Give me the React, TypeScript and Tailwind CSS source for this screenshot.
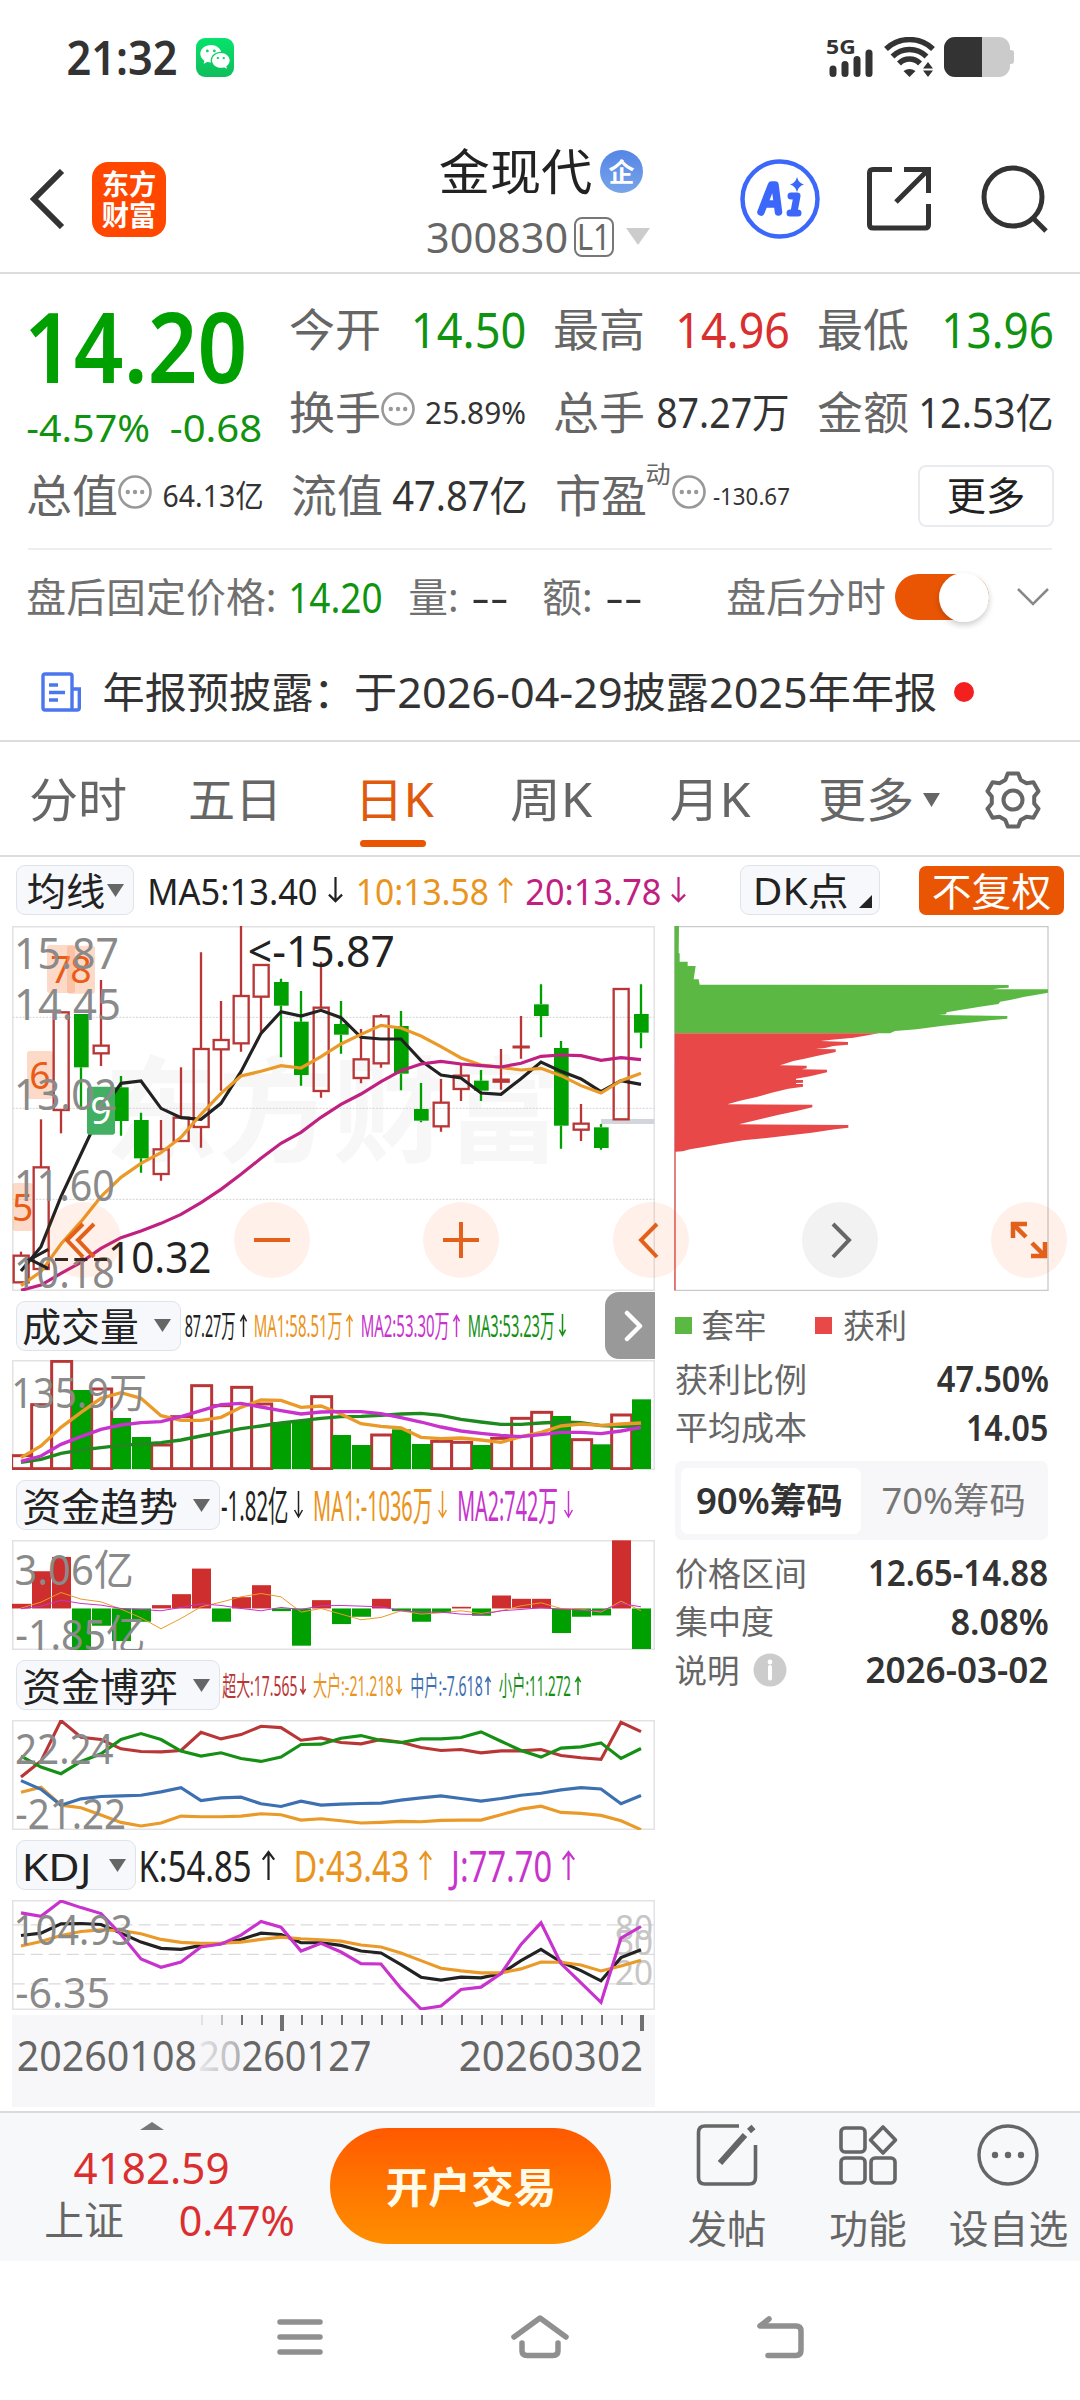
import React, { useLayoutEffect, useRef, useState } from 'react';
import { RiWechatFill } from 'react-icons/ri';

const FONT = "font-['Noto_Sans','Noto_Sans_CJK_SC',sans-serif]";

/** One line of text, squeezed or stretched horizontally to the width of its box. */
function Fit({ className = '', children }: { className?: string; children: string }) {
  const outer = useRef<HTMLSpanElement>(null);
  const inner = useRef<HTMLSpanElement>(null);
  const [scale, setScale] = useState(1);
  useLayoutEffect(() => {
    if (!outer.current || !inner.current) return;
    const size = parseFloat(getComputedStyle(inner.current).fontSize);
    setScale((outer.current.clientWidth + size * 0.09) / inner.current.offsetWidth);
  }, [children]);
  return (
    <span ref={outer} className={`inline-flex shrink-0 justify-center whitespace-nowrap leading-none ${className}`}>
      <span ref={inner} className="inline-block shrink-0" style={{ transform: `scaleX(${scale})` }}>
        {children}
      </span>
    </span>
  );
}

function Arrow({ up = false, thin = false, className = '' }: { up?: boolean; thin?: boolean; className?: string }) {
  return (
    <svg viewBox="0 0 16 28" preserveAspectRatio="none" className={`shrink-0 overflow-visible ${className}`} fill="none" stroke="currentColor" strokeWidth={thin ? 1.5 : 2.2}>
      <path d={up ? 'M8 28V2M1 9L8 2L15 9' : 'M8 0V26M1 19L8 26L15 19'} vectorEffect="non-scaling-stroke" />
    </svg>
  );
}

function Down({ className = '' }: { className?: string }) {
  return (
    <svg viewBox="0 0 16 13" preserveAspectRatio="none" className={`shrink-0 ${className}`} fill="currentColor">
      <path d="M0 0H16L8 13Z" />
    </svg>
  );
}

function Dots() {
  return (
    <svg viewBox="0 0 34 34" className="h-[34px] w-[34px] shrink-0 text-[#999]" fill="none" stroke="currentColor" strokeWidth="2.6">
      <circle cx="17" cy="17" r="15.5" />
      <g fill="currentColor" stroke="none">
        <circle cx="9.8" cy="17" r="2.2" />
        <circle cx="17" cy="17" r="2.2" />
        <circle cx="24.2" cy="17" r="2.2" />
      </g>
    </svg>
  );
}

function StatusBar() {
  return (
    <div className="flex h-[115px] items-center pb-px pl-[68px] pr-[66px] text-[#333]">
      <Fit className="w-[107px] text-[46px] font-semibold">21:32</Fit>
      <div className="ml-[21px] flex h-[39px] w-[38px] items-center justify-center rounded-[9px] bg-gradient-to-b from-[#06e36c] to-[#0fbd5c]">
        <RiWechatFill className="h-[32px] w-[32px] text-white" />
      </div>
      <div className="ml-auto flex h-[40px] items-center">
        <div className="flex h-[40px] w-[48px] flex-col justify-between">
          <Fit className="w-[28px] text-[20px] font-bold">5G</Fit>
          <svg viewBox="0 0 48 28" className="-mt-[8px] h-[28px] w-[48px]" fill="none" stroke="#333" strokeWidth="7" strokeLinecap="round">
            <path d="M6 20V24.500M18 15.500V24.500M30 10.500V24.500M42 4V24.500" />
          </svg>
        </div>
        <svg viewBox="0 0 52 40" className="ml-[9px] h-[40px] w-[52px]" fill="none" stroke="#333" strokeWidth="5.500">
          <path d="M2 12A34 34 0 0 1 49 12M8.500 19.500A24 24 0 0 1 42.500 19.500M15 26.500A14.500 14.500 0 0 1 36 26.500" />
          <path d="M25.500 40L19.500 34Q25.500 30 31.500 34ZM44 25L49 31.500H39ZM44 40L39 33.500H49Z" fill="#333" stroke="none" />
        </svg>
        <div className="ml-[8px] flex h-[40px] w-[66px] overflow-hidden rounded-[11px] bg-[#cbcbcb]">
          <div className="w-[38px] bg-[#333]" />
        </div>
        <div className="h-[14px] w-[4px] rounded-r-[3px] bg-[#cbcbcb]" />
      </div>
    </div>
  );
}

function Header() {
  return (
    <div className="flex h-[159px] items-center border-b-2 border-[#dcdcdc] pt-[11px]">
      <svg viewBox="0 0 36 60" className="ml-[29px] h-[60px] w-[36px]" fill="none" stroke="#333" strokeWidth="6">
        <path d="M33 2L5 30L33 58" />
      </svg>
      <div className="ml-[27px] flex h-[75px] w-[74px] flex-col items-center justify-center gap-[3px] rounded-[16px] bg-[#ff4700] text-[28px] font-bold text-white">
        <Fit className="w-[52px]">东方</Fit>
        <Fit className="w-[52px]">财富</Fit>
      </div>
      <div className="ml-[262px] mt-[7px] flex w-[222px] flex-col">
        <div className="ml-[13px] flex h-[46px] items-center">
          <Fit className="w-[149px] text-[49px] text-[#222]">金现代</Fit>
          <div className="ml-[10px] flex h-[43px] w-[43px] items-center justify-center rounded-full bg-gradient-to-b from-[#5585e6] to-[#78a4e8] text-[26px] font-bold leading-none text-white">
            企
          </div>
        </div>
        <div className="mt-[22px] flex h-[40px] items-center text-[#666]">
          <Fit className="w-[138px] text-[42px]">300830</Fit>
          <div className="ml-[8px] flex h-[40px] w-[41px] items-center justify-center rounded-[8px] border-2 border-[#777]">
            <Fit className="w-[30px] text-[36px]">L1</Fit>
          </div>
          <Down className="ml-[12px] h-[17px] w-[24px] text-[#ccc]" />
        </div>
      </div>
      <svg viewBox="0 0 80 80" className="ml-[90px] h-[80px] w-[80px]" fill="none" stroke="#3b68fa">
        <circle cx="40" cy="40" r="37.500" strokeWidth="4.500" />
        <path d="M21 53L31.500 26L35 26L38.500 53M26 45H37" strokeWidth="7.500" strokeLinejoin="round" strokeLinecap="round" />
        <path d="M57 37L54 53M51 37H57M50 54H58" strokeWidth="7" strokeLinecap="round" />
        <path d="M57 18Q58.500 24 64 25.500Q58.500 27 57 33Q55.500 27 50 25.500Q55.500 24 57 18Z" fill="#3b68fa" stroke="none" />
      </svg>
      <svg viewBox="0 0 66 66" className="ml-[46px] h-[66px] w-[66px]" fill="none" stroke="#333" strokeWidth="5">
        <path d="M26 3.500H7Q3.500 3.500 3.500 7V58.500Q3.500 62 7 62H59Q62.500 62 62.500 58.500V38M38 3.500H62.500V27M62 4L30 36" />
      </svg>
      <svg viewBox="0 0 68 68" className="ml-[49px] h-[68px] w-[68px]" fill="none" stroke="#333" strokeWidth="5">
        <circle cx="32" cy="32" r="29" />
        <path d="M52 53L65 66" />
      </svg>
    </div>
  );
}

function Cell({ label, value, w, color = 'text-[#333]', dots = false, sup = '', first = false }: { label: string; value: string; w: string; color?: string; dots?: boolean; sup?: string; first?: boolean }) {
  return (
    <div className={`flex h-[83px] w-[235px] items-center justify-between ${first ? '' : 'pl-[2px]'}`}>
      <div className="flex items-center">
        <Fit className="w-[88px] text-[45px] text-[#666]">{label}</Fit>
        {sup && <Fit className="-mt-[44px] ml-[2px] w-[23px] text-[24px] text-[#666]">{sup}</Fit>}
        {dots && <div className="-mt-[7px] ml-[2px]"><Dots /></div>}
      </div>
      <Fit className={`${w} ${color}`}>{value}</Fit>
    </div>
  );
}

function Quote() {
  return (
    <div className="mx-[28px] flex flex-col border-b-2 border-[#eee] pb-[11px] pt-[14px]">
      <div className="flex gap-[29px]">
        <div className="flex w-[235px] flex-col text-[#00a000]">
          <div className="flex h-[113px] items-center">
            <Fit className="ml-px w-[214px] text-[98px] font-semibold">14.20</Fit>
          </div>
          <div className="flex h-[50px] items-center justify-between text-[#109310]">
            <Fit className="w-[120px] text-[39px]">-4.57%</Fit>
            <Fit className="w-[89px] text-[39px]">-0.68</Fit>
          </div>
        </div>
        <div className="grid grid-cols-[235px_235px_235px] gap-x-[29px]">
          <Cell label="今开" value="14.50" w="w-[111px] text-[49px]" color="text-[#109310]" />
          <Cell label="最高" value="14.96" w="w-[110px] text-[49px]" color="text-[#d92f2f]" />
          <Cell label="最低" value="13.96" w="w-[108px] text-[49px]" color="text-[#109310]" />
          <Cell label="换手" value="25.89%" w="w-[98px] text-[31px]" dots />
          <Cell label="总手" value="87.27万" w="w-[130px] text-[41px]" />
          <Cell label="金额" value="12.53亿" w="w-[132px] text-[41px]" />
        </div>
      </div>
      <div className="flex gap-[29px]">
        <Cell label="总值" value="64.13亿" w="w-[98px] text-[31px]" dots first />
        <Cell label="流值" value="47.87亿" w="w-[132px] text-[41px]" />
        <Cell label="市盈" value="-130.67" w="w-[75px] text-[24px]" dots sup="动" />
        <div className="relative left-[2px] flex h-[83px] w-[235px] items-center justify-end">
          <div className="flex h-[62px] w-[136px] items-center justify-center rounded-[8px] border-2 border-[#e9ebee] pb-[3px]">
            <Fit className="w-[75px] text-[39px] text-[#222]">更多</Fit>
          </div>
        </div>
      </div>
    </div>
  );
}

function AfterHours() {
  return (
    <div className="flex h-[94px] items-center pl-[28px] text-[40px] text-[#707070]">
      <Fit className="w-[247px]">盘后固定价格:</Fit>
      <Fit className="ml-[15px] w-[91px] text-[41px] text-[#109310]">14.20</Fit>
      <Fit className="ml-[29px] w-[47px]">量:</Fit>
      <Fit className="ml-[16px] w-[34px] text-[#333]">--</Fit>
      <Fit className="ml-[37px] w-[47px]">额:</Fit>
      <Fit className="ml-[16px] w-[34px] text-[#333]">--</Fit>
      <Fit className="ml-[87px] w-[156px]">盘后分时</Fit>
      <div className="ml-[11px] flex h-[46px] w-[94px] items-center justify-end rounded-full bg-[#ea5504]">
        <div className="h-[49px] w-[50px] shrink-0 rounded-full bg-white shadow-[0_3px_6px_rgba(0,0,0,0.2)]" />
      </div>
      <svg viewBox="0 0 34 20" className="ml-[27px] h-[20px] w-[34px]" fill="none" stroke="#888" strokeWidth="2.500">
        <path d="M2 2L17 17L32 2" />
      </svg>
    </div>
  );
}

function News() {
  return (
    <div className="flex h-[98px] items-center border-b-2 border-[#dcdcdc] pl-[41px]">
      <svg viewBox="0 0 40 40" className="h-[40px] w-[40px]" fill="none" stroke="#4a76ee" strokeWidth="3.400">
        <path d="M31 38H4Q2 38 2 36V4Q2 2 4 2H29Q31 2 31 4V38H36Q38.300 38 38.300 36V17H31M8 13H17M8 20.500H24M8 28H17" />
      </svg>
      <div className="ml-[23px] flex text-[42px] text-[#333]">
        <Fit className="w-[249px]">年报预披露：</Fit>
        <Fit className="ml-[3px] w-[579px]">于2026-04-29披露2025年年报</Fit>
      </div>
      <div className="ml-[19px] h-[20px] w-[20px] rounded-full bg-[#f42020]" />
    </div>
  );
}

function gearPath() {
  const pts: string[] = [];
  for (let i = 0; i < 6; i++) {
    for (const [off, r] of [[-21, 21.500], [-11, 27], [11, 27], [21, 21.500]]) {
      const a = ((i * 60 + off - 90) * Math.PI) / 180;
      pts.push(`${(30 + r * Math.cos(a)).toFixed(1)} ${(30 + r * Math.sin(a)).toFixed(1)}`);
    }
  }
  return `M${pts.join('L')}Z`;
}

function Tabs() {
  return (
    <div className="flex h-[115px] items-center border-b-2 border-[#dcdcdc] pl-[31px] pt-[2px] text-[47px] text-[#666]">
      <Fit className="w-[94px]">分时</Fit>
      <Fit className="ml-[65px] w-[90px]">五日</Fit>
      <div className="relative ml-[77px] flex">
        <Fit className="w-[75px] text-[#df5a0c]">日K</Fit>
        <div className="absolute left-[3px] top-[64px] h-[7px] w-[66px] rounded-full bg-[#ea5504]" />
      </div>
      <Fit className="ml-[80px] w-[78px]">周K</Fit>
      <Fit className="ml-[82px] w-[77px]">月K</Fit>
      <Fit className="ml-[71px] w-[92px]">更多</Fit>
      <Down className="ml-[11px] h-[14px] w-[17px] text-[#666]" />
      <svg viewBox="0 0 60 60" className="ml-[43px] h-[60px] w-[60px]" fill="none" stroke="#666" strokeWidth="4" strokeLinejoin="round">
        <path d={gearPath()} />
        <circle cx="30" cy="30" r="9.500" />
      </svg>
    </div>
  );
}

function MaRow() {
  return (
    <div className="flex h-[69px] items-center pb-[3px] pl-[16px] text-[37px]">
      <div className="flex h-[50px] w-[118px] items-center rounded-[9px] border border-[#dfe3ea] bg-[#f7f8fb] pl-[11px]">
        <Fit className="w-[75px] text-[38px] text-[#222]">均线</Fit>
        <Down className="ml-[4px] h-[13px] w-[17px] text-[#666]" />
      </div>
      <div className="flex items-center text-[#222]">
        <Fit className="ml-[15px] w-[167px]">MA5:13.40</Fit>
        <Arrow className="ml-[12px] h-[26px] w-[15px]" />
      </div>
      <div className="flex items-center text-[#ea9420]">
        <Fit className="ml-[14px] w-[130px]">10:13.58</Fit>
        <Arrow up className="ml-[11px] h-[26px] w-[15px]" />
      </div>
      <div className="flex items-center text-[#c0207f]">
        <Fit className="ml-[14px] w-[133px]">20:13.78</Fit>
        <Arrow className="ml-[11px] h-[26px] w-[15px]" />
      </div>
      <div className="ml-[54px] flex h-[50px] w-[140px] items-center rounded-[9px] border border-[#dfe3ea] bg-[#f7f8fb] pl-[14px]">
        <Fit className="w-[92px] text-[38px] text-[#222]">DK点</Fit>
        <svg viewBox="0 0 13 13" className="ml-[12px] mt-[22px] h-[13px] w-[13px]"><path d="M13 0V13H0Z" fill="#222" /></svg>
      </div>
      <div className="ml-[39px] flex h-[49px] w-[145px] items-center justify-center rounded-[7px] bg-[#ea5504]">
        <Fit className="w-[116px] text-[39px] text-white">不复权</Fit>
      </div>
    </div>
  );
}

/* Charts use three drawing units per pixel; a trading day is 60 units wide. */
const RED = '#b93636';
const GREEN = '#00a000';
const ORANGE = '#ea9a28';
const PURPLE = '#c733cc';
const day = (i: number) => 63 + 60 * i;

function Line({ v, color, w = 9.5 }: { v: number[]; color: string; w?: number }) {
  return <polyline points={v.map((y, i) => `${day(i)},${y}`).join(' ')} fill="none" stroke={color} strokeWidth={w} />;
}

function Label({ x, y, w, size = 132, fill = '#8a8a8a', weight = 400, children }: { x: number; y: number; w: number; size?: number; fill?: string; weight?: number; children: string }) {
  const lead = children.startsWith('1') ? 0.09 : 0.05;
  return (
    <text x={x - size * lead} y={y} fontSize={size} fill={fill} fontWeight={weight} textLength={w + size * (lead + 0.05)} lengthAdjust="spacingAndGlyphs">
      {children}
    </text>
  );
}

function Frame({ y, h }: { y: number; h: number }) {
  return <rect x="38" y={y + 2} width="1925" height={h - 4} fill="none" stroke="#e2e2e4" strokeWidth="5" />;
}

// [rising, body top, body bottom, high, low]
const candles: [number, number, number, number, number][] = [
  [1, 1217, 1297, 1205, 1297], [1, 952, 1257, 808, 1257], [1, 487, 780, 487, 850], [0, 492, 652, 492, 772],
  [1, 587, 610, 390, 648], [0, 712, 813, 678, 857], [0, 810, 925, 788, 968], [1, 898, 972, 810, 992],
  [1, 803, 873, 652, 873], [1, 597, 831, 307, 893], [1, 570, 598, 453, 722], [1, 438, 580, 228, 605],
  [1, 345, 440, 345, 548], [0, 396, 467, 386, 622], [0, 515, 675, 423, 707], [1, 473, 723, 335, 743],
  [0, 522, 554, 453, 611], [1, 628, 684, 537, 700], [1, 499, 640, 492, 653], [0, 528, 671, 483, 721],
  [0, 777, 812, 699, 817], [1, 758, 829, 687, 845], [1, 677, 717, 645, 753], [0, 692, 722, 660, 753],
  [1, 689, 695, 597, 719], [1, 590, 592, 498, 626], [0, 463, 498, 403, 562], [0, 594, 827, 573, 896],
  [1, 821, 839, 762, 873], [0, 832, 894, 822, 899], [1, 417, 808, 417, 808], [0, 492, 548, 403, 595],
];
const ma5 = [1263, 1190, 1040, 912, 785, 700, 693, 775, 803, 808, 760, 665, 550, 485, 498, 481, 503, 562, 567, 567, 632, 675, 684, 729, 733, 686, 636, 664, 687, 725, 692, 703];
const ma10 = [1307, 1265, 1182, 1115, 1040, 982, 940, 908, 862, 793, 730, 678, 664, 647, 654, 620, 582, 553, 526, 534, 558, 590, 624, 645, 652, 660, 655, 677, 707, 729, 692, 670];
const ma20 = [1321, 1305, 1270, 1237, 1195, 1163, 1143, 1120, 1093, 1058, 1018, 973, 925, 880, 847, 802, 763, 732, 695, 662, 642, 634, 642, 647, 651, 640, 619, 615, 617, 631, 623, 629];

function Mark({ x, y, n, w = 84, green = false }: { x: number; y: number; n: string; w?: number; green?: boolean }) {
  return (
    <g>
      <rect x={x} y={y} width={w} height="144" rx="8" fill={green ? '#42b062' : 'rgba(250,160,115,0.4)'} />
      <text x={x + w / 2} y={y + 113} fontSize="112" textAnchor="middle" fill={green ? '#fff' : '#ea5b15'}>{n}</text>
    </g>
  );
}

function MainChart() {
  return (
    <svg viewBox="36 228 1929 1095" className="block h-[365px] w-[643px]">
      <Label x={330} y={908} w={1335} size={345} fill="#f7f7f7" weight={700}>东方财富</Label>
      <Frame y={228} h={1095} />
      {[502, 775, 1048].map((y) => <path key={y} d={`M38 ${y}H1962`} stroke="#d4d4d4" strokeWidth="3" strokeDasharray="6 4" />)}
      <rect x="1803" y="807" width="160" height="15" fill="#d2d5dc" />
      <Mark x={141} y={285} n="7" />
      <Mark x={201} y={287} n="8" />
      <Mark x={81} y={603} n="6" w={78} />
      <Mark x={38} y={999} n="5" w={60} />
      {candles.map(([up, t, b, hi, lo], i) => {
        const c = up ? RED : GREEN;
        return (
          <g key={i} stroke={c} strokeWidth="7">
            <path d={`M${day(i)} ${hi}V${t}M${day(i)} ${b}V${lo}`} />
            {up ? <rect x={day(i) - 22} y={t} width="45" height={b - t} fill="none" /> : <rect x={day(i) - 21} y={t} width="44" height={b - t} fill={c} stroke="none" />}
          </g>
        );
      })}
      <Line v={ma5} color="#222" />
      <Line v={ma10} color={ORANGE} />
      <Line v={ma20} color="#c0207f" />
      <Mark x={261} y={710} n="9" green />
      <Label x={54} y={358} w={296}>15.87</Label>
      <Label x={54} y={509} w={302}>14.45</Label>
      <Label x={54} y={781} w={292}>13.02</Label>
      <Label x={54} y={1054} w={284}>11.60</Label>
      <Label x={54} y={1315} w={284}>10.18</Label>
      <Label x={750} y={352} w={428} fill="#222">{'<-15.87'}</Label>
      <Label x={336} y={1268} w={292} fill="#222">10.32</Label>
      <path d="M145 1198L90 1228L145 1256" fill="none" stroke="#222" strokeWidth="9" />
      <rect x="165" y="1224" width="39" height="9" fill="#222" />
      <rect x="223" y="1224" width="39" height="9" fill="#222" />
      <rect x="282" y="1224" width="39" height="9" fill="#222" />
    </svg>
  );
}

const volume = [495, 342, 212, -300, 295, -384, -441, 463, 378, 285, 345, 290, 340, -396, -390, 318, -435, -465, 433, -418, -462, 452, 455, -465, 443, 383, 365, -378, 447, -463, 373, -328];
const vol1 = [503, 468, 412, 367, 325, 308, 325, 377, 391, 391, 382, 352, 330, 331, 352, 348, 372, 401, 409, 414, 442, 446, 444, 450, 457, 440, 427, 408, 402, 406, 402, 399];
const vol2 = [514, 498, 463, 440, 418, 405, 398, 395, 380, 362, 344, 340, 351, 362, 372, 366, 365, 365, 371, 383, 396, 411, 423, 430, 436, 440, 434, 427, 427, 431, 423, 412];
const vol3 = [517, 508, 490, 480, 473, 466, 462, 458, 450, 438, 427, 416, 408, 399, 392, 385, 380, 379, 376, 372, 370, 376, 388, 396, 403, 403, 399, 396, 398, 407, 409, 408];

function VolumeChart() {
  return (
    <svg viewBox="36 210 1929 330" className="block h-[110px] w-[643px]">
      <Frame y={210} h={330} />
      {volume.map((v, i) =>
        v < 0 ? null : <rect key={i} x={day(i) - 28} y={v + 2} width="60" height={534 - v} fill="#fff" stroke={RED} strokeWidth="9" />
      )}
      {volume.map((v, i) => (v > 0 ? null : <rect key={i} x={day(i) - 27} y={-v} width="57" height={537 + v} fill={GREEN} />))}
      <Line v={vol3} color="#1e8a1e" w={10} />
      <Line v={vol1} color={ORANGE} w={10} />
      <Line v={vol2} color={PURPLE} w={10} />
      <Label x={45} y={355} w={390} size={126}>135.9万</Label>
    </svg>
  );
}

const flow = [941, 843, 800, 1080, 1007, 1053, 995, 945, 912, 835, 995, 921, 885, 963, 1067, 930, 1002, 980, 926, 963, 995, 968, 950, 977, 916, 926, 926, 1029, 980, 976, 750, 1077];
const flow1 = [954, 936, 907, 927, 935, 957, 983, 1016, 985, 950, 936, 920, 910, 920, 966, 955, 972, 989, 982, 962, 972, 968, 962, 970, 962, 947, 938, 955, 957, 966, 933, 962];
const flow2 = [956, 948, 930, 940, 945, 955, 958, 962, 952, 941, 946, 955, 962, 952, 958, 947, 946, 948, 950, 962, 966, 966, 972, 974, 962, 958, 953, 957, 960, 962, 940, 950];

function FlowChart() {
  return (
    <svg viewBox="36 749 1929 331" className="block h-[110px] w-[643px]" preserveAspectRatio="none">
      <Frame y={749} h={331} />
      {flow.map((v, i) => (
        <rect key={i} x={day(i) - 27} y={Math.min(v, 955)} width="57" height={Math.abs(v - 955)} fill={v < 955 ? '#cf2e2e' : GREEN} />
      ))}
      <Line v={flow1} color={ORANGE} w={3} />
      <Line v={flow2} color={PURPLE} w={3} />
      <Label x={50} y={884} w={345} size={126}>3.06亿</Label>
      <Label x={52} y={1079} w={378} size={126}>-1.85亿</Label>
    </svg>
  );
}

const gRed = [410, 362, 240, 290, 297, 325, 333, 334, 330, 275, 295, 282, 257, 261, 299, 292, 306, 310, 297, 305, 321, 330, 327, 337, 331, 331, 327, 345, 352, 357, 245, 273];
const gGreen = [347, 380, 400, 363, 340, 297, 279, 297, 332, 347, 337, 354, 363, 350, 312, 311, 293, 285, 300, 306, 295, 295, 291, 274, 302, 330, 350, 323, 319, 307, 354, 324];
const gBlue = [421, 447, 495, 476, 469, 467, 465, 455, 442, 481, 473, 471, 491, 499, 483, 495, 492, 490, 489, 480, 473, 467, 475, 483, 475, 465, 459, 449, 442, 446, 491, 466];
const gOrange = [456, 441, 495, 503, 525, 547, 558, 549, 528, 530, 530, 528, 521, 524, 540, 536, 542, 549, 547, 544, 545, 541, 540, 540, 524, 507, 498, 517, 520, 526, 542, 569];

function GameChart() {
  return (
    <svg viewBox="36 238 1929 332" className="block h-[110px] w-[643px]" preserveAspectRatio="none">
      <Frame y={238} h={332} />
      <Line v={gRed} color={RED} />
      <Line v={gOrange} color={ORANGE} />
      <Line v={gBlue} color="#3d70b0" />
      <Line v={gGreen} color="#159015" />
      <Label x={51} y={372} w={284} size={124}>22.24</Label>
      <Label x={52} y={568} w={320} size={124}>-21.22</Label>
    </svg>
  );
}

const kLine = [885, 878, 850, 849, 852, 878, 905, 924, 927, 915, 910, 897, 878, 882, 907, 907, 915, 932, 938, 973, 1011, 1020, 1011, 1013, 1000, 961, 927, 965, 991, 1022, 952, 928];
const dLine = [917, 903, 885, 873, 868, 870, 880, 897, 906, 909, 908, 905, 897, 890, 895, 898, 902, 914, 920, 938, 961, 984, 992, 998, 998, 986, 965, 966, 974, 992, 977, 960];
const jLine = [817, 827, 781, 801, 819, 882, 956, 981, 965, 920, 911, 884, 843, 860, 932, 909, 935, 970, 971, 1045, 1107, 1098, 1048, 1041, 1000, 912, 847, 970, 1028, 1087, 893, 858];

function KdjChart() {
  return (
    <svg viewBox="36 778 1929 332" className="block h-[110px] w-[643px]" preserveAspectRatio="none">
      <Frame y={778} h={332} />
      {[853, 942, 1031].map((y) => <path key={y} d={`M38 ${y}H1962`} stroke="#dadada" strokeWidth="4" strokeDasharray="36 18" />)}
      <Label x={1850} y={900} w={104} size={102} fill="#c6c6c6">80</Label>
      <Label x={1850} y={945} w={104} size={102} fill="#c6c6c6">50</Label>
      <Label x={1850} y={1034} w={104} size={102} fill="#c6c6c6">20</Label>
      <Line v={kLine} color="#222" />
      <Line v={dLine} color={ORANGE} />
      <Line v={jLine} color={PURPLE} />
      <Label x={52} y={913} w={340} size={124}>104.93</Label>
      <Label x={52} y={1103} w={272} size={124}>-6.35</Label>
    </svg>
  );
}

function Axis() {
  return (
    <div className="mt-[5px] flex h-[92px] w-[643px] flex-col bg-[#f7f7f9]">
      <svg viewBox="12 0 643 18" className="block h-[18px] w-[643px] shrink-0">
        {Array.from({ length: 23 }, (_, k) => {
          const x = 202 + 20 * k;
          const big = k === 4 || k === 22;
          return <path key={k} d={`M${x} 0V${big ? 16 : 10}`} stroke={k === 0 ? '#e2e2e2' : k === 1 ? '#bdbdbd' : '#707070'} strokeWidth={big ? 4 : 2} />;
        })}
      </svg>
      <div className="flex h-[44px] items-center pl-[6px] text-[41px] text-[#666]">
        <Fit className="w-[177px]">20260108</Fit>
        <div className="relative ml-[5px] flex">
          <Fit className="w-[170px]">20260127</Fit>
          <div className="absolute -left-[2px] top-0 h-[41px] w-[43px] bg-gradient-to-r from-[#f7f7f9]/90 to-[#f7f7f9]/50" />
        </div>
        <Fit className="ml-[90px] w-[181px]">20260302</Fit>
      </div>
    </div>
  );
}

function Picker({ w, text, children }: { w: string; text: string; children: string }) {
  return (
    <div className={`ml-[4px] flex h-[50px] shrink-0 items-center justify-between rounded-[9px] border border-[#dfe3ea] bg-[#f7f8fb] pl-[7px] pr-[9px] ${w}`}>
      <Fit className={`text-[39px] text-[#222] ${text}`}>{children}</Fit>
      <Down className="h-[13px] w-[17px] text-[#666]" />
    </div>
  );
}

function Left() {
  return (
    <div className="ml-[12px] flex w-[643px] flex-col">
      <MainChart />
      <div className="flex h-[69px] items-center text-[31px]">
        <Picker w="w-[165px]" text="w-[113px]">成交量</Picker>
        <Fit className="ml-[5px] w-[48px] text-[#222]">87.27万</Fit>
        <Arrow up thin className="ml-[6px] h-[23px] w-[7px] text-[#222]" />
        <Fit className="ml-[8px] w-[86px] text-[#ea9420]">MA1:58.51万</Fit>
        <Arrow up thin className="ml-[5px] h-[23px] w-[7px] text-[#ea9420]" />
        <Fit className="ml-[9px] w-[86px] text-[#c733cc]">MA2:53.30万</Fit>
        <Arrow up thin className="ml-[5px] h-[23px] w-[7px] text-[#c733cc]" />
        <Fit className="ml-[9px] w-[84px] text-[#159015]">MA3:53.23万</Fit>
        <Arrow thin className="ml-[6px] h-[23px] w-[7px] text-[#159015]" />
        <div className="ml-auto flex h-[67px] w-[50px] items-center justify-center rounded-l-[14px] bg-[#999] pl-[7px]">
          <svg viewBox="0 0 20 32" className="h-[32px] w-[20px]" fill="none" stroke="#fff" strokeWidth="4.500" strokeLinecap="round" strokeLinejoin="round"><path d="M3 3L16 16L3 29" /></svg>
        </div>
      </div>
      <VolumeChart />
      <div className="flex h-[70px] items-center text-[41px]">
        <Picker w="w-[204px]" text="w-[152px]">资金趋势</Picker>
        <Fit className="ml-[3px] w-[64px] text-[#222]">-1.82亿</Fit>
        <Arrow thin className="ml-[7px] h-[28px] w-[9px] text-[#222]" />
        <Fit className="ml-[12px] w-[116px] text-[#ea9420]">MA1:-1036万</Fit>
        <Arrow thin className="ml-[7px] h-[28px] w-[9px] text-[#ea9420]" />
        <Fit className="ml-[12px] w-[97px] text-[#c733cc]">MA2:742万</Fit>
        <Arrow thin className="ml-[8px] h-[28px] w-[9px] text-[#c733cc]" />
      </div>
      <FlowChart />
      <div className="flex h-[70px] items-center text-[27px]">
        <Picker w="w-[204px]" text="w-[152px]">资金博弈</Picker>
        <Fit className="ml-[3px] w-[73px] text-[#b93636]">超大:17.565</Fit>
        <Arrow thin className="ml-[4px] h-[19px] w-[6px] text-[#b93636]" />
        <Fit className="ml-[8px] w-[78px] text-[#ea9420]">大户:-21.218</Fit>
        <Arrow thin className="ml-[4px] h-[19px] w-[6px] text-[#ea9420]" />
        <Fit className="ml-[9px] w-[70px] text-[#3d70b0]">中户:-7.618</Fit>
        <Arrow up thin className="ml-[4px] h-[19px] w-[6px] text-[#3d70b0]" />
        <Fit className="ml-[9px] w-[70px] text-[#159015]">小户:11.272</Fit>
        <Arrow up thin className="ml-[5px] h-[19px] w-[6px] text-[#159015]" />
      </div>
      <GameChart />
      <div className="flex h-[70px] items-center text-[43px]">
        <Picker w="w-[120px]" text="w-[66px]">KDJ</Picker>
        <Fit className="ml-[5px] w-[109px] text-[#222]">K:54.85</Fit>
        <Arrow up className="ml-[12px] h-[30px] w-[13px] text-[#222]" />
        <Fit className="ml-[20px] w-[112px] text-[#ea9420]">D:43.43</Fit>
        <Arrow up className="ml-[12px] h-[30px] w-[13px] text-[#ea9420]" />
        <Fit className="ml-[21px] w-[97px] text-[#c733cc]">J:77.70</Fit>
        <Arrow up className="ml-[12px] h-[30px] w-[13px] text-[#c733cc]" />
      </div>
      <KdjChart />
      <Axis />
    </div>
  );
}

const trapped = '74,228 87,228 86,310 89,310 89,335 113,335 113,348 137,348 131,388 146,388 149,404 1076,405 1076,413 1050,415 1028,418 1194,418 1194,428 1160,434 1120,441 1080,450 1050,455 1046,462 990,470 930,480 890,487 888,493 866,495 1072,498 1072,506 1020,511 960,518 880,527 845,532 800,538 735,543 720,550 74,550';
const profit = '74,550 686,550 645,557 610,563 545,569 511,573 594,576 594,584 550,588 525,594 497,597 557,598 557,606 500,618 460,627 430,633 400,643 389,646 470,647 470,655 455,658 531,659 531,667 480,679 438,686 438,690 459,690 459,698 438,699 438,702 459,702 459,710 415,716 365,728 320,741 270,752 232,763 487,764 487,772 440,783 380,796 320,810 267,823 595,825 595,833 555,838 485,848 420,856 350,864 280,871 215,881 165,890 120,898 98,904 77,905 77,1321 73,1321';

function ChipRow({ label, value, w, lw, info = false }: { label: string; value: string; w: string; lw: string; info?: boolean }) {
  return (
    <div className="flex h-[48.500px] items-center pl-[2px] pr-[2px]">
      <Fit className={`text-[33px] text-[#666] ${lw}`}>{label}</Fit>
      {info && (
        <svg viewBox="0 0 34 34" className="ml-[15px] h-[34px] w-[34px]">
          <circle cx="17" cy="17" r="16.500" fill="#ccc" />
          <path d="M17 14V25.500" stroke="#fff" strokeWidth="4" strokeLinecap="round" />
          <circle cx="17" cy="9" r="2.400" fill="#fff" />
        </svg>
      )}
      <Fit className={`ml-auto text-[36px] font-semibold text-[#333] ${w}`}>{value}</Fit>
    </div>
  );
}

function Right() {
  return (
    <div className="ml-[19px] flex w-[375px] flex-col">
      <svg viewBox="72 228 1125 1095" className="block h-[365px] w-[375px]">
        <path d="M74 230H1194V1321H74Z" fill="none" stroke="#c9c9c9" strokeWidth="4" />
        <polygon points={trapped} fill="#5bb843" />
        <polygon points={profit} fill="#e84848" />
      </svg>
      <div className="flex h-[64px] items-center pl-px pt-[5px] text-[33px] text-[#666]">
        <div className="h-[17px] w-[17px] bg-[#5bb843]" />
        <Fit className="ml-[11px] w-[62px]">套牢</Fit>
        <div className="ml-[50px] h-[17px] w-[17px] bg-[#e84848]" />
        <Fit className="ml-[12px] w-[61px]">获利</Fit>
      </div>
      <ChipRow label="获利比例" lw="w-[129px]" value="47.50%" w="w-[109px]" />
      <ChipRow label="平均成本" lw="w-[129px]" value="14.05" w="w-[79px]" />
      <div className="ml-px mt-[9px] flex h-[79px] w-[373px] items-center rounded-[7px] bg-[#f7f7fa] pl-[6px] text-[36px]">
        <div className="flex h-[66px] w-[180px] items-center justify-center rounded-[7px] bg-white pr-[4px]">
          <Fit className="w-[144px] font-semibold text-[#333]">90%筹码</Fit>
        </div>
        <Fit className="ml-[22px] w-[141px] text-[#777]">70%筹码</Fit>
      </div>
      <div className="mt-[9px] flex flex-col">
        <ChipRow label="价格区间" lw="w-[129px]" value="12.65-14.88" w="w-[177px]" />
        <ChipRow label="集中度" lw="w-[96px]" value="8.08%" w="w-[95px]" />
        <ChipRow label="说明" lw="w-[62px]" value="2026-03-02" w="w-[180px]" info />
      </div>
    </div>
  );
}

function Round({ className, d, color = '#e2601a', w = 4 }: { className: string; d: string; color?: string; w?: number }) {
  return (
    <div className={`absolute top-[276px] h-[76px] w-[76px] rounded-full ${className}`}>
      <svg viewBox="0 0 76 76" className="h-[76px] w-[76px]" fill="none" stroke={color} strokeWidth={w}><path d={d} /></svg>
    </div>
  );
}

function Charts() {
  return (
    <div className="relative flex h-[1185px]">
      <Left />
      <Right />
      <Round className="left-[45px] bg-[rgba(255,90,10,0.09)]" d="M49 22L33 38L49 55M38 22L22 38L38 55" />
      <Round className="left-[234px] bg-[rgba(255,90,10,0.09)]" d="M20 38H56" />
      <Round className="left-[423px] bg-[rgba(255,90,10,0.09)]" d="M20 38H56M38 20V56" />
      <Round className="left-[613px] bg-[rgba(255,90,10,0.09)]" d="M44 22L28 38L44 55" />
      <Round className="left-[802px] bg-[#f2f2f2]" color="#666" d="M31 22L47 38L31 55" />
      <Round className="left-[991px] bg-[rgba(255,90,10,0.09)]" w={4.5} d="M22 36V22H36M22 22L35 35M54 40V54H40M54 54L41 41" />
    </div>
  );
}

function BottomBar() {
  return (
    <div className="flex h-[150px] border-t-2 border-[#d8dadc] bg-[#f7f8fa]">
      <div className="flex w-[330px] flex-col pl-[46px] pt-[9px]">
        <svg viewBox="0 0 24 8" className="ml-[94px] h-[8px] w-[24px]"><path d="M0 8L12 0L24 8Z" fill="#777" /></svg>
        <div className="mt-[13px] flex h-[48px] items-center pl-[30px] text-[#db2f2f]">
          <Fit className="w-[152px] text-[43px]">4182.59</Fit>
        </div>
        <div className="mt-[7px] flex h-[44px] items-center">
          <Fit className="w-[76px] text-[40px] text-[#666]">上证</Fit>
          <Fit className="ml-[59px] w-[112px] text-[41px] text-[#db2f2f]">0.47%</Fit>
        </div>
      </div>
      <div className="mt-[15px] flex h-[116px] w-[281px] items-center justify-center rounded-full bg-gradient-to-b from-[#ff5800] to-[#ff8e00] pt-[2px]">
        <Fit className="w-[167px] text-[42px] font-bold text-[#fffbe8]">开户交易</Fit>
      </div>
      <div className="ml-[77px] flex w-[78px] flex-col items-center pt-[10px]">
        <svg viewBox="0 0 64 64" className="h-[64px] w-[64px]" fill="none" stroke="#666" strokeWidth="3.600">
          <path d="M44 3H10Q3.500 3 3.500 9.500V54.500Q3.500 61 10 61H54Q60.500 61 60.500 54.500V22" />
          <path d="M25 40L50 12M54 8L58.500 4" strokeWidth="6" />
        </svg>
        <Fit className="mt-[21px] w-[75px] text-[39px] text-[#666]">发帖</Fit>
      </div>
      <div className="ml-[63px] flex w-[78px] flex-col items-center pt-[10px]">
        <svg viewBox="0 0 64 64" className="h-[64px] w-[64px]" fill="none" stroke="#666" strokeWidth="3.600" strokeLinejoin="round">
          <rect x="5" y="5" width="24" height="24" rx="4" />
          <rect x="5" y="35" width="24" height="25" rx="4" />
          <rect x="35" y="35" width="24" height="25" rx="4" />
          <path d="M47 4L59.500 17L47 30L34.500 17Z" />
        </svg>
        <Fit className="mt-[21px] w-[74px] text-[39px] text-[#666]">功能</Fit>
      </div>
      <div className="ml-[42px] flex w-[118px] flex-col items-center pt-[10px]">
        <svg viewBox="0 0 64 64" className="h-[64px] w-[64px]" fill="none" stroke="#666" strokeWidth="3.400">
          <circle cx="32" cy="32" r="29" />
          <g fill="#666" stroke="none"><circle cx="19" cy="32" r="3.200" /><circle cx="32" cy="32" r="3.200" /><circle cx="45" cy="32" r="3.200" /></g>
        </svg>
        <Fit className="mt-[21px] w-[116px] text-[39px] text-[#666]">设自选</Fit>
      </div>
    </div>
  );
}

function NavBar() {
  return (
    <div className="flex h-[139px] items-center pl-[276px] pt-[13px]">
      <svg viewBox="0 0 48 40" className="h-[40px] w-[48px]" stroke="#909090" strokeWidth="5.500" strokeLinecap="round"><path d="M4 5H44M4 20H44M4 35H44" /></svg>
      <svg viewBox="0 0 60 46" className="ml-[186px] h-[46px] w-[60px]" fill="none" stroke="#909090" strokeWidth="5.500" strokeLinecap="round" strokeLinejoin="round">
        <path d="M4 23L30 4L56 23M12 29V37Q12 41.500 17 41.500H43Q48 41.500 48 37V29" />
      </svg>
      <svg viewBox="0 0 50 46" className="ml-[185px] h-[46px] w-[50px]" fill="none" stroke="#909090" strokeWidth="5.500" strokeLinecap="round" strokeLinejoin="round">
        <path d="M14 5L5 12H41Q46 12 46 17V36Q46 41.500 41 41.500H13" />
      </svg>
    </div>
  );
}

export default function App() {
  return (
    <div className={`flex h-[2400px] w-[1080px] flex-col overflow-hidden bg-white ${FONT}`}>
      <StatusBar />
      <Header />
      <Quote />
      <AfterHours />
      <News />
      <Tabs />
      <MaRow />
      <Charts />
      <BottomBar />
      <NavBar />
    </div>
  );
}
